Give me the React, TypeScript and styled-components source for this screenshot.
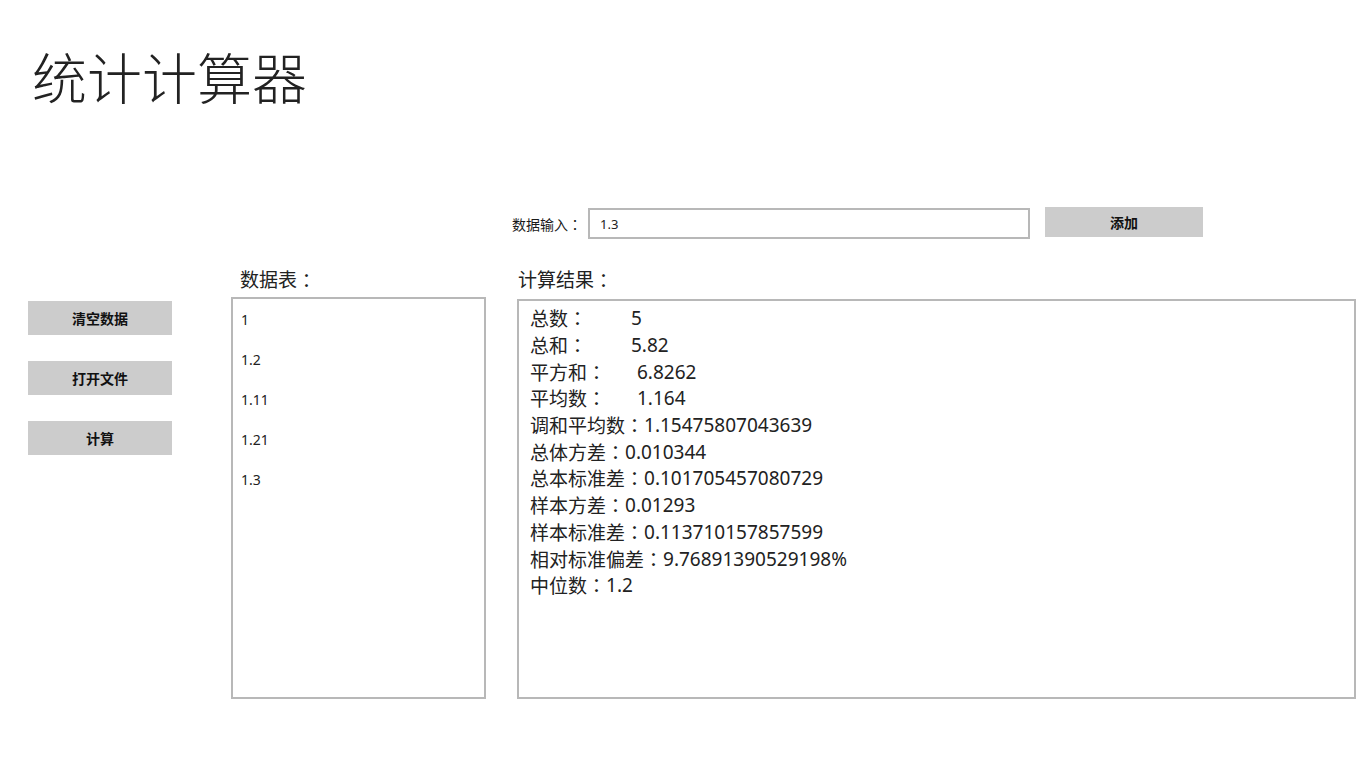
import { useState } from "react";
import styled, { createGlobalStyle } from "styled-components";

const GlobalStyle = createGlobalStyle`
  html, body {
    margin: 0;
    padding: 0;
    background: #ffffff;
  }
  body {
    font-family: "Noto Sans", "Noto Sans CJK SC", sans-serif;
    color: #222222;
  }
  * {
    box-sizing: border-box;
  }
`;

const Page = styled.div`
  width: 1366px;
  height: 768px;
  padding: 0 0 0 28px;
  overflow: hidden;
`;

const Title = styled.h1`
  margin: 48px 0 0 4px;
  font-family: "Noto Sans CJK SC", sans-serif;
  font-weight: 300;
  font-size: 55px;
  line-height: 55px;
  color: #222222;
`;

// full-width colon drawn centred, as the reference font does
const Colon = styled.span`
  font-family: "Noto Sans CJK TC", "Noto Sans CJK SC", sans-serif;
  line-height: 1;
`;

const InputBar = styled.div`
  display: flex;
  align-items: flex-start;
  margin: 104px 0 0 484px;
  height: 32px;
`;

const InputLabel = styled.label`
  display: flex;
  align-items: center;
  height: 31px;
  font-size: 14px;
  margin-top: 1px;
  margin-right: 6px;
  color: #1a1a1a;
`;

const TextInput = styled.input`
  width: 442px;
  height: 31px;
  margin-top: 1px;
  border: 2px solid #b8b8b8;
  padding: 0 10px;
  font-family: "Noto Sans", "Noto Sans CJK SC", sans-serif;
  font-size: 13px;
  color: #222222;
  outline: none;
`;

const GreyButton = styled.button<{ $width: number; $height: number }>`
  width: ${(p) => p.$width}px;
  height: ${(p) => p.$height}px;
  border: none;
  background: #cccccc;
  font-family: "Noto Sans", "Noto Sans CJK SC", sans-serif;
  font-weight: 700;
  font-size: 14px;
  color: #111111;
  padding: 0;
  cursor: pointer;
`;

const AddButton = styled(GreyButton)`
  margin-left: 15px;
`;

const Body = styled.div`
  display: flex;
  align-items: flex-start;
  margin-top: 27px;
`;

const Sidebar = styled.div`
  display: flex;
  flex-direction: column;
  gap: 26px;
  width: 144px;
  padding-top: 35px;
`;

const Column = styled.div<{ $width: number; $offset: number }>`
  display: flex;
  flex-direction: column;
  width: ${(p) => p.$width}px;
  margin-left: ${(p) => p.$offset}px;
`;

const SectionLabel = styled.div<{ $indent: number; $gap: number }>`
  display: flex;
  align-items: center;
  height: 26px;
  font-size: 19px;
  padding-left: ${(p) => p.$indent}px;
  margin-bottom: ${(p) => p.$gap}px;
  color: #222222;
`;

const Panel = styled.div<{ $height: number }>`
  height: ${(p) => p.$height}px;
  border: 2px solid #b8b8b8;
  background: #ffffff;
`;

const ListItem = styled.div`
  height: 40px;
  line-height: 41px;
  padding-left: 8px;
  font-size: 14px;
  color: #222222;
`;

const ResultText = styled.div`
  padding: 4px 0 0 11px;
  font-size: 19px;
  color: #222222;
`;

const ResultRow = styled.div`
  display: flex;
  align-items: center;
  height: 26.7px;
  white-space: pre;
`;

const ResultKey = styled.span<{ $min?: number }>`
  display: inline-block;
  min-width: ${(p) => (p.$min ? `${p.$min}px` : "auto")};
`;

const results: { key: string; value: string; min?: number }[] = [
  { key: "总数", value: "5", min: 101 },
  { key: "总和", value: "5.82", min: 101 },
  { key: "平方和", value: "6.8262", min: 107 },
  { key: "平均数", value: "1.164", min: 107 },
  { key: "调和平均数", value: "1.15475807043639" },
  { key: "总体方差", value: "0.010344" },
  { key: "总本标准差", value: "0.101705457080729" },
  { key: "样本方差", value: "0.01293" },
  { key: "样本标准差", value: "0.113710157857599" },
  { key: "相对标准偏差", value: "9.76891390529198%" },
  { key: "中位数", value: "1.2" },
];

export default function App() {
  const [input, setInput] = useState("1.3");
  const data = ["1", "1.2", "1.11", "1.21", "1.3"];

  return (
    <Page>
      <GlobalStyle />
      <Title>统计计算器</Title>
      <InputBar>
        <InputLabel>
          数据输入<Colon>：</Colon>
        </InputLabel>
        <TextInput value={input} onChange={(e) => setInput(e.target.value)} />
        <AddButton $width={158} $height={30}>
          添加
        </AddButton>
      </InputBar>
      <Body>
        <Sidebar>
          <GreyButton $width={144} $height={34}>清空数据</GreyButton>
          <GreyButton $width={144} $height={34}>打开文件</GreyButton>
          <GreyButton $width={144} $height={34}>计算</GreyButton>
        </Sidebar>
        <Column $width={255} $offset={59}>
          <SectionLabel $indent={9} $gap={5}>
            数据表<Colon>：</Colon>
          </SectionLabel>
          <Panel $height={402}>
            {data.map((d) => (
              <ListItem key={d}>{d}</ListItem>
            ))}
          </Panel>
        </Column>
        <Column $width={839} $offset={31}>
          <SectionLabel $indent={1} $gap={7}>
            计算结果<Colon>：</Colon>
          </SectionLabel>
          <Panel $height={400}>
            <ResultText>
              {results.map((r) => (
                <ResultRow key={r.key}>
                  <ResultKey $min={r.min}>
                    {r.key}
                    <Colon>：</Colon>
                  </ResultKey>
                  <span>{r.value}</span>
                </ResultRow>
              ))}
            </ResultText>
          </Panel>
        </Column>
      </Body>
    </Page>
  );
}
